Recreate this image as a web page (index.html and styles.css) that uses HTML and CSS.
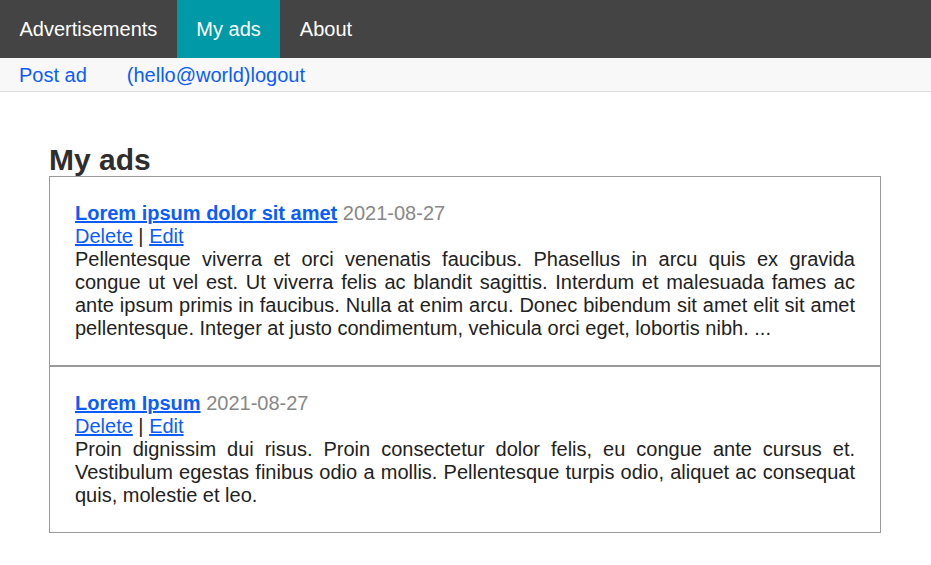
FILE: index.html
```html
<!DOCTYPE html>
<html>
<head>
<meta charset="utf-8">
<link rel="stylesheet" href="styles.css">
</head>
<body>
<nav class="topnav">
  <a class="tab" href="#">Advertisements</a>
  <a class="tab active" href="#">My ads</a>
  <a class="tab" href="#">About</a>
</nav>
<div class="subnav">
  <a href="#">Post ad</a>
  <a href="#">(hello@world)logout</a>
</div>
<main class="page">
  <h1 class="title">My ads</h1>
  <div class="ads">
    <article class="ad">
      <div><a class="ad-title" href="#">Lorem ipsum dolor sit amet</a> <span class="date">2021-08-27</span></div>
      <div><a href="#">Delete</a> | <a href="#">Edit</a></div>
      <p class="desc">Pellentesque viverra et orci venenatis faucibus. Phasellus in arcu quis ex gravida congue ut vel est. Ut viverra felis ac blandit sagittis. Interdum et malesuada fames ac ante ipsum primis in faucibus. Nulla at enim arcu. Donec bibendum sit amet elit sit amet pellentesque. Integer at justo condimentum, vehicula orci eget, lobortis nibh. ...</p>
    </article>
    <article class="ad">
      <div><a class="ad-title" href="#">Lorem Ipsum</a> <span class="date">2021-08-27</span></div>
      <div><a href="#">Delete</a> | <a href="#">Edit</a></div>
      <p class="desc">Proin dignissim dui risus. Proin consectetur dolor felis, eu congue ante cursus et. Vestibulum egestas finibus odio a mollis. Pellentesque turpis odio, aliquet ac consequat quis, molestie et leo.</p>
    </article>
  </div>
</main>
</body>
</html>
```
FILE: styles.css
```css
html, body {
  margin: 0;
  padding: 0;
  background: #fff;
  font-family: "Liberation Sans", Arial, sans-serif;
  font-size: 20px;
  line-height: 23px;
  color: #222;
}
a { color: #0a5cff; }
.topnav {
  display: flex;
  height: 58px;
  background: #444444;
}
.tab {
  display: flex;
  align-items: center;
  padding: 0 19.5px;
  color: #fff;
  text-decoration: none;
}
.tab.active { background: #0099a8; }
.subnav {
  display: flex;
  gap: 40px;
  padding: 6px 19px 4px;
  background: #f8f8f8;
  border-bottom: 1px solid #dddddd;
}
.subnav a { text-decoration: none; }
.page {
  padding: 51px 50px 0 49px;
}
.title {
  margin: 0;
  font-size: 30px;
  line-height: 33px;
  color: #2e2e2e;
}
.ad {
  padding: 25px;
  border: 1px solid #999;
}
.ad-title { font-weight: bold; }
.date { color: #888; }
.desc {
  margin: 0;
  text-align: justify;
}
```
